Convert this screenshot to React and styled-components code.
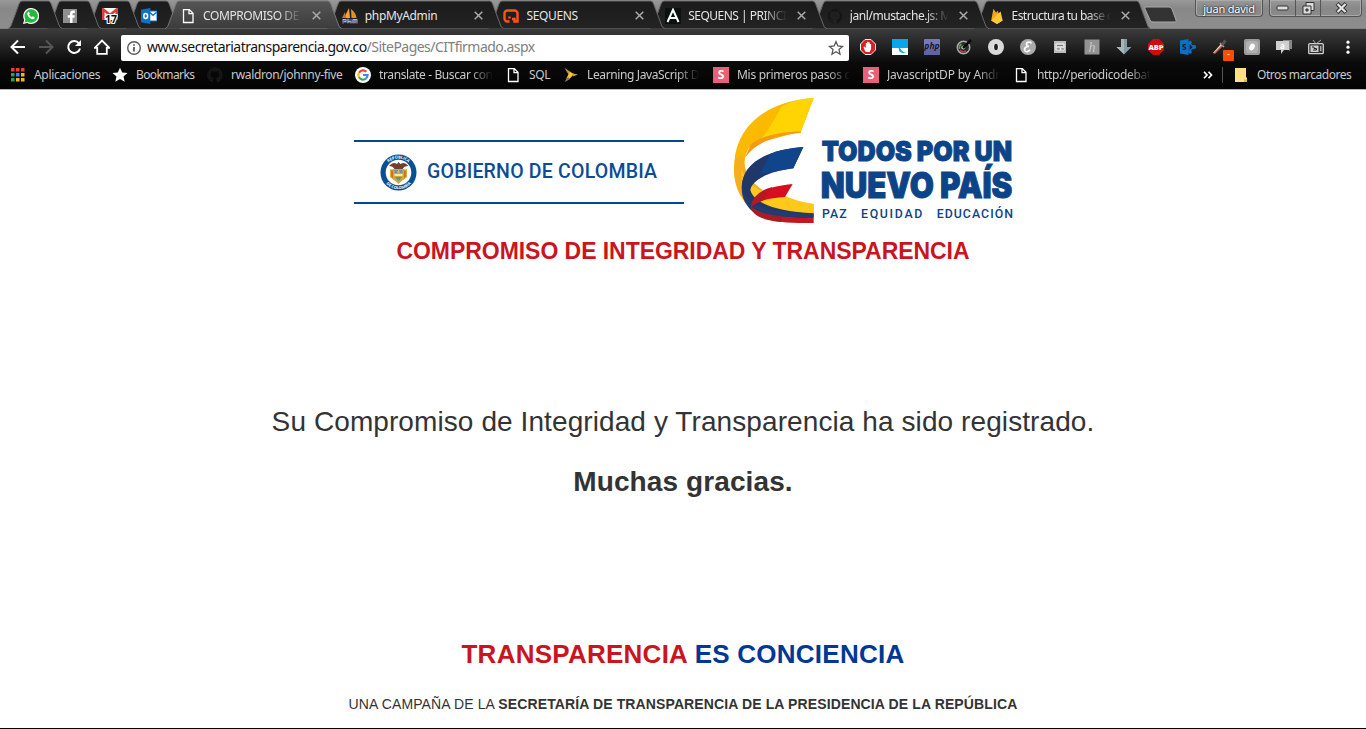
import React from "react";
import styled, { createGlobalStyle } from "styled-components";

const UI = `"Noto Sans", "Open Sans", sans-serif`;

const Global = createGlobalStyle`
  * { box-sizing: border-box; }
  body { margin: 0; background: #fff; overflow: hidden; font-family: "Liberation Sans", Arial, sans-serif; }
  svg { display: block; }
`;

const Window = styled.div`
  width: 1366px;
  height: 729px;
  display: flex;
  flex-direction: column;
  border-bottom: 1px solid #000;
  background: #fff;
`;

const TabStrip = styled.div`
  height: 28px;
  display: flex;
  padding-left: 8px;
  background: linear-gradient(#999, #888 30%, #8e8e8e);
`;

const TabBox = styled.div`
  position: relative;
  z-index: ${(p) => p.$z};
  flex: none;
  width: ${(p) => p.$w}px;
  height: 29px;
  margin-right: -15px;
  padding: 2px 0 0 15px;
  display: flex;
  align-items: center;
`;

const TabShape = styled.svg`
  position: absolute;
  inset: 0;
  z-index: -1;
`;

const TabTitle = styled.span`
  width: 99px;
  margin-left: 7px;
  white-space: nowrap;
  font: 12px/18px ${UI};
  letter-spacing: ${(p) => p.$ls}px;
  color: #e4e4e4;
  ${(p) => p.$fade && "mask-image: linear-gradient(90deg, #000 76%, transparent 100%);"}
`;

const TabClose = styled.svg`
  margin-left: 10px;
`;

const NewTab = styled.svg`
  margin: 6px 0 0 9px;
  flex: none;
`;

const WindowControls = styled.div`
  display: flex;
  gap: 6px;
  margin-left: auto;
  padding-right: 4px;
`;

const UserButton = styled.div`
  width: 68px;
  height: 17px;
  border: 1px solid #555;
  border-top: 0;
  border-radius: 0 0 4px 4px;
  box-shadow: inset 0 0 0 1px #aaa;
  color: #fff;
  font: 11px/17px ${UI};
  letter-spacing: -0.2px;
  text-align: center;
  text-shadow: 0 0 2px #222, 0 0 2px #222;
`;

const ControlGroup = styled.div`
  display: flex;
  height: 17px;
  border: 1px solid #555;
  border-top: 0;
  border-radius: 0 0 4px 4px;
  box-shadow: inset 0 0 0 1px #aaa;
`;

const Control = styled.div`
  width: ${(p) => p.$w}px;
  display: flex;
  justify-content: center;
  align-items: center;
  & + & { border-left: 1px solid #555; }
`;

const Chrome = styled.div`
  height: 62px;
  background: linear-gradient(#3b3b3b, #222 18px, #0a0a0a 34px, #030303);
  border-top: 1px solid #808080;
  border-bottom: 1px solid #b5b5b5;
`;

const Toolbar = styled.div`
  height: 36px;
  display: flex;
  align-items: center;
  padding-left: 10px;
`;

const NavButtons = styled.div`
  display: flex;
  gap: 12px;
  width: 111px;
`;

const AddressBar = styled.div`
  width: 728px;
  height: 26px;
  margin-top: 1px;
  padding: 0 5px;
  display: flex;
  align-items: center;
  background: #fff;
  border-radius: 2px;
`;

const Url = styled.span`
  flex: 1;
  margin-left: 5px;
  padding-bottom: 2px;
  white-space: nowrap;
  font: 14px/20px ${UI};
  letter-spacing: -0.53px;
  color: #808080;
  b { font-weight: 400; color: #111; }
`;

const Extensions = styled.div`
  display: flex;
  gap: 16px;
  margin-left: 11px;
`;

const ExtBadge = styled.span`
  position: absolute;
  left: 11px;
  top: 11px;
  width: 11px;
  height: 11px;
  background: #ff4d00;
  border-radius: 1px;
  color: #fff;
  font: 9px/8px ${UI};
  text-align: center;
`;

const ExtIcon = styled.div`
  position: relative;
  width: 16px;
  height: 16px;
`;

const Bookmarks = styled.div`
  height: 24px;
  margin-top: -2px;
  padding-left: 10px;
  display: flex;
  align-items: center;
`;

const Bookmark = styled.div`
  width: ${(p) => p.$w}px;
  flex: none;
  display: flex;
  align-items: center;
  gap: 8px;
`;

const BookmarkText = styled.span`
  max-width: 114px;
  white-space: nowrap;
  font: 12px/18px ${UI};
  letter-spacing: ${(p) => p.$ls}px;
  color: #c9c9c9;
  ${(p) => p.$fade && "mask-image: linear-gradient(90deg, #000 80%, transparent 100%);"}
`;

const BookmarkDivider = styled.div`
  width: 1px;
  height: 16px;
  margin: 0 10px 0 9px;
  background: #555;
`;

const Page = styled.main`
  flex: 1;
  display: flex;
  flex-direction: column;
  align-items: center;
  color: #333;
  text-align: center;
  white-space: nowrap;
`;

const Logos = styled.div`
  width: 662px;
  height: 140px;
  display: flex;
  justify-content: space-between;
`;

const Government = styled.div`
  width: 330px;
  height: 64px;
  margin: 50px 0 0 2px;
  padding-left: 26px;
  display: flex;
  align-items: center;
  border-top: 2px solid #00498f;
  border-bottom: 2px solid #00498f;
`;

const GovernmentName = styled.span`
  margin-left: 10px;
  font: 500 19.500px/24px Roboto, sans-serif;
  letter-spacing: 0.21px;
  color: #0b4c92;
`;

const Heading = styled.h1`
  margin: 6px 0 0;
  font-size: 23px;
  line-height: 30px;
  letter-spacing: -0.05px;
  color: #c9151e;
`;

const Message = styled.p`
  margin: 136px 0 0;
  font-size: 28px;
  line-height: 40px;
  letter-spacing: 0.09px;
`;

const Thanks = styled.p`
  margin: 20px 0 0;
  font-size: 28px;
  line-height: 40px;
  font-weight: 700;
  letter-spacing: 0.1px;
`;

const Slogan = styled.h2`
  margin: 134px 0 0;
  font-size: 26px;
  line-height: 36px;
  letter-spacing: 0.25px;
  color: #003893;
  span { color: #c9151e; }
`;

const Campaign = styled.p`
  margin: 22px 0 0;
  font-size: 14px;
  line-height: 20px;
  letter-spacing: 0.12px;
`;

const Svg = ({ s = 16, children, ...p }) => (
  <svg width={s} height={s} viewBox="0 0 16 16" fill="none" style={{ flex: "none" }} {...p}>{children}</svg>
);

const T = (p) => <text fontFamily="Open Sans, sans-serif" textAnchor="middle" {...p} />;

const github = "M8 .6a7.5 7.5 0 0 0-2.4 14.6c.4.1.5-.2.5-.4v-1.4c-2.1.4-2.6-1-2.6-1-.4-.9-.9-1.1-.9-1.1-.6-.5.1-.5.1-.5.8.1 1.2.8 1.2.8.7 1.2 1.8.8 2.2.6 0-.5.3-.8.5-1C4.900 11 3.100 10.400 3.100 7.500c0-.8.3-1.500.8-2-.1-.2-.3-1 .1-2 0 0 .6-.2 2 .8a7 7 0 0 1 3.800 0c1.400-1 2-.8 2-.8.4 1 .2 1.800.1 2 .5.5.8 1.200.8 2 0 2.900-1.700 3.500-3.400 3.700.3.2.5.7.5 1.400v2.200c0 .2.1.500.5.400A7.500 7.500 0 0 0 8 .6z";

const icons = {
  whatsapp: (
    <Svg><path d="M0 16l1.200-4.200A8 8 0 1 1 4.200 14.900z" fill="#fff" /><path d="M1.500 14.500l.9-3.100A6.700 6.700 0 1 1 4.700 13.700z" fill="#25b83c" /><path d="M5.200 3.900c.4-.3.900-.1 1 .3l.6 1.400-.7 1c.6 1.200 1.500 2 2.700 2.600l1-.9 1.800.9c.2 1.200-.7 2-1.800 2C7 11 4 8 4.200 5.600c0-.7.500-1.300 1-1.700z" fill="#fff" /></Svg>
  ),
  facebook: (
    <Svg><rect x="1" y="1" width="14" height="14" fill="#8f8f8f" /><path d="M8 15V9.700H5.800V7.200H8V5.500C8 3.500 9.100 2.500 11 2.500h1.800v2.400h-1.300c-.8 0-1 .4-1 1v1.300h2.300l-.4 2.500h-1.900V15z" fill="#fff" /></Svg>
  ),
  gmail: (
    <Svg><rect y="0" width="16" height="12" fill="#f4f4f4" /><path d="M1.300 12V1.500L8 7l6.700-5.500V12" stroke="#dc3b35" strokeWidth="2.500" /><path d="M3 0h10L8 4z" fill="#fff" /><T x="9" y="15.300" fontSize="10.500" fontWeight="700" fill="#111" stroke="#fff" strokeWidth="2.200" strokeLinejoin="round" style={{ paintOrder: "stroke" }}>17</T></Svg>
  ),
  outlook: (
    <Svg><path d="M8 3h8v10H8z" fill="#fff" stroke="#0d72c6" /><path d="M9 4.500l3 2.800 3.500-3" stroke="#0d72c6" strokeWidth="1.300" /><path d="M0 1.700L9.300 0v16L0 14.300z" fill="#0d72c6" /><ellipse cx="4.700" cy="8" rx="1.900" ry="2.500" stroke="#fff" strokeWidth="1.600" /></Svg>
  ),
  file: <Svg><path d="M3.500 1.600h5.800L13 5.300v9.200H3.500zM9 1.600v4h4" stroke="#fff" strokeWidth="1.300" /></Svg>,
  phpmyadmin: (
    <Svg><path d="M7 0l1 10H2z" fill="#f5a13a" /><path d="M9 1c4 3 5 6 5.500 9L9.500 10z" fill="#ed8e24" /><path d="M3 4L4 10H0z" fill="#b7783d" /><path d="M0 11h16l-2 4H2z" fill="#4f4c78" /><path d="M1 15.500v-4h3v2H2m4-3v5m0-2h3v2m2 0v-4h4v4m-2-4v4" stroke="#c8c4dc" strokeWidth=".8" /></Svg>
  ),
  sequens: <Svg><path d="M6.500 13.500H4.500a3 3 0 0 1-3-3v-5a3 3 0 0 1 3-3h7a3 3 0 0 1 3 3v8h-3v-2.500H9M6.500 8.500v2" stroke="#ff560f" strokeWidth="2.400" /></Svg>,
  letterA: <Svg><rect width="16" height="16" fill="#0a1210" /><path d="M2.500 14L8 1.800 13.500 14M4.700 10h6.600" stroke="#fff" strokeWidth="2" /></Svg>,
  github: <Svg><path d={github} fill="#151515" stroke="#2c2c2c" strokeWidth=".3" /></Svg>,
  firebase: <Svg><path d="M2.200 12.500L4.400.700l2.700 4 1.300-2 5.200 9.800L8 16z" fill="#ffa611" /><path d="M2.200 12.500L11.600 3.600l2 8.900L8 16z" fill="#ffca3a" /></Svg>,
  apps: (
    <Svg>{[0, 1, 2].map((r) => [0, 1, 2].map((c) => (
      <rect key={`${r}${c}`} x={1 + c * 5} y={1 + r * 5} width="3.500" height="3.500" fill={[["#ed3b32", "#ed3b32", "#ed3b32"], ["#2ba24c", "#3b82f0", "#f6b51c"], ["#2ba24c", "#f6b51c", "#f6b51c"]][r][c]} />
    )))}</Svg>
  ),
  star: <Svg><path d="M8 .7l2.200 4.900 5.300.5-4 3.500 1.200 5.200L8 12.100l-4.700 2.700 1.200-5.200-4-3.500 5.300-.5z" fill="#fff" /></Svg>,
  google: (
    <Svg><circle cx="8" cy="8" r="8" fill="#fff" /><g strokeWidth="2.200"><path d="M4 5.700A4.600 4.600 0 0 1 11.300 4.800" stroke="#ea4335" /><path d="M4 5.600a4.600 4.600 0 0 0 0 4.800" stroke="#fbbc05" /><path d="M4 10.300a4.600 4.600 0 0 0 7 1.200" stroke="#34a853" /><path d="M8 8h4.600a4.600 4.600 0 0 1-1.600 3.500" stroke="#4285f4" /></g></Svg>
  ),
  bird: <Svg><path d="M1.500 1l7 4.500L7 10z" fill="#c99332" /><path d="M7 5l4 2-4.500 5-4 2.500L4 10z" fill="#f1cb20" /><path d="M10 6.500l5 1-5 2z" fill="#b5a45a" /><path d="M5 10l-3.500 5 5.500-3z" fill="#8a5a9a" /></Svg>,
  slides: <Svg><rect width="16" height="16" fill="#e8607a" /><T x="8" y="12.300" fontSize="12" fontWeight="700" fill="#fff">S</T></Svg>,
  folder: <Svg><path d="M2 1h11v9.500h1V15H2z" fill="#ffe083" /><path d="M11 15v-2.500h3V15z" fill="#e5b83f" /></Svg>,
};

const extensions = [
  <><path d="M5 .5h6L15.500 5v6L11 15.500H5L.5 11V5z" fill="#dc1c20" stroke="#eee" /><path d="M5 12L3.500 8l1-.5L5.800 9V4h1.300v3.500V2.800h1.400v4.700V3.500h1.300V8V5h1.300v5l-1.500 3H6z" fill="#fff" /></>,
  <><rect width="16" height="16" fill="#07a6ed" /><path d="M0 9h6.500l1 3.500 2.500 1.500h6v2H0zM8 9h8v5l-4-.5-2-1.500z" fill="#fff" /></>,
  <><rect width="16" height="16" rx="1" fill="#7679b5" /><rect y="10" width="16" height="6" fill="#6063a6" /><T x="8" y="9.500" fontSize="8.500" fontWeight="700" fontStyle="italic" fill="#15152b">php</T></>,
  <><circle cx="7.500" cy="8.500" r="6.200" fill="#282828" stroke="#aaa" strokeWidth="1.500" /><path d="M3.500 10a4.500 4.500 0 0 1 2-5" stroke="#58a34c" strokeWidth="1.600" /><path d="M4 11a4.500 4.500 0 0 0 6 1" stroke="#b8434b" strokeWidth="1.500" /><circle cx="7.300" cy="8.500" r="2" fill="#ccc" /><path d="M7 9L15 1" stroke="#090909" strokeWidth="2.500" /></>,
  <><circle cx="8" cy="8" r="8" fill="#d9d9d9" /><ellipse cx="8" cy="8" rx="2.500" ry="4" fill="#202020" stroke="#fff" /></>,
  <><circle cx="8" cy="8" r="8" fill="#aaa" /><path d="M11.300 4.500C10.500 2 6 3 6.500 5.500 6.700 7 8 7.300 9 7.300 5.500 7.300 4 9.500 4.700 11.500c.8 2 4 1.500 5.300-.8" stroke="#fff" strokeWidth="1.700" /></>,
  <><rect x="2" y="2" width="12" height="12" fill="#bdbdbd" /><path d="M4 5h8v6H4zM4 8h8M8.500 8v3" stroke="#eee" /><path d="M5 6.500h6M5 10h2.500M9.500 10H12" stroke="#777" /></>,
  <><rect x=".5" y=".5" width="15" height="15" fill="#929292" /><T x="8" y="13" fontSize="14" fontStyle="italic" fontFamily="Liberation Serif, serif" fill="#c7c7c7">h</T></>,
  <><path d="M5 0h6v8h4.500L8 15.500.5 8H5z" fill="#829da3" /><path d="M5 0h3v15L.5 8H5z" fill="#a9b6b8" /></>,
  <><path d="M5 0h6l5 5v6l-5 5H5l-5-5V5z" fill="#d10b0b" /><T x="8" y="10.800" fontSize="7.500" fontWeight="800" fill="#fff">ABP</T></>,
  <><path d="M9 4l5 4-5 4.500M9 4v9" stroke="#0872c9" strokeWidth="1.300" /><circle cx="10" cy="3.500" r="1.800" fill="#0872c9" /><circle cx="14.200" cy="8" r="1.900" fill="#0872c9" /><circle cx="10" cy="13" r="1.800" fill="#0872c9" /><path d="M0 1.500L8.500 0v16L0 14.500z" fill="#0872c9" /><T x="4.300" y="11.300" fontSize="9" fontWeight="700" fill="#161616">S</T></>,
  <><path d="M1 14l8-9 2 2-8 8z" fill="#c45f3c" /><path d="M1 14l8-9 1 1-8 8z" fill="#e8d0c5" /><path d="M8 4l4 4" stroke="#aaa" strokeWidth="1.500" /><path d="M10 6l3.500-4.500" stroke="#555" strokeWidth="3" /></>,
  <><rect width="16" height="16" rx="2" fill="#9b9b9b" /><rect x="2" y="2" width="12" height="12" rx="3" fill="#b0b0b0" /><ellipse cx="8" cy="8" rx="2.600" ry="3.500" fill="#fff" transform="rotate(25 8 8)" /></>,
  <><path d="M7 1h9v9h-2v2l-3-2H7z" fill="#888" /><path d="M0 2h13v9H8l-3 4v-4H0z" fill="#cfcfcf" /><T x="6.500" y="9.500" fontSize="8" fontWeight="700" fill="#fff">a</T></>,
  <><path d="M5 1l3 4 5-4" stroke="#aaa" /><rect x=".7" y="4.700" width="14.600" height="10" rx="1" fill="#333" stroke="#ccc" strokeWidth="1.300" /><rect x="2.500" y="6.500" width="8" height="6.500" fill="#ccc" /><path d="M4 8h2v1.500h2.500V11H5" stroke="#222" /><path d="M12.800 7v5" stroke="#ddd" /></>,
  <><circle cx="8" cy="3.200" r="1.600" fill="#fff" /><circle cx="8" cy="8.200" r="1.600" fill="#fff" /><circle cx="8" cy="13.200" r="1.600" fill="#fff" /></>,
];

const tabs = [
  { icon: "whatsapp", w: 54.25 },
  { icon: "facebook", w: 54.25 },
  { icon: "gmail", w: 54.25 },
  { icon: "outlook", w: 54.25 },
  { icon: "file", title: "COMPROMISO DE", w: 176.8, active: true, ls: -0.4 },
  { icon: "phpmyadmin", title: "phpMyAdmin", w: 176.7, ls: -0.35 },
  { icon: "sequens", title: "SEQUENS", w: 176.7, ls: -0.35 },
  { icon: "letterA", title: "SEQUENS | PRINCI", w: 176.7, ls: -0.5 },
  { icon: "github", title: "janl/mustache.js: M", w: 176.7, ls: -0.45 },
  { icon: "firebase", title: "Estructura tu base d", w: 176.7, ls: -0.55 },
];

const bookmarks = [
  { icon: "apps", text: "Aplicaciones", w: 102, ls: -0.3 },
  { icon: "star", text: "Bookmarks", w: 95, ls: -0.6 },
  { icon: "github", text: "rwaldron/johnny-five", w: 148, ls: -0.33 },
  { icon: "google", text: "translate - Buscar con", w: 150, fade: true, ls: -0.38 },
  { icon: "file", text: "SQL", w: 58, ls: -0.4 },
  { icon: "bird", text: "Learning JavaScript D", w: 150, fade: true, ls: -0.38 },
  { icon: "slides", text: "Mis primeros pasos c", w: 150, fade: true, ls: -0.3 },
  { icon: "slides", text: "JavascriptDP by Andr", w: 150, fade: true, ls: -0.2 },
  { icon: "file", text: "http://periodicodebat", w: 190, fade: true, ls: -0.35 },
];

function Tab({ icon, title, w, active, ls, index }) {
  return (
    <TabBox $w={w} $z={active ? 20 : 15 - index}>
      <TabShape width={w} height="29">
        <defs><linearGradient id={`tab${index}`} x2="0" y2="1"><stop stopColor={active ? "#555" : "#1b1b1b"} /><stop offset="1" stopColor={active ? "#3c3c3c" : "#232323"} /></linearGradient></defs>
        <path d={`M0 28.500C2 28 3 26 4 23L11 4Q12 1 14 1H${w - 14}Q${w - 12} 1 ${w - 11} 4L${w - 4} 23Q${w - 3} 28 ${w} 28.500`} fill={`url(#tab${index})`} stroke={active ? "#777" : "#686868"} />
      </TabShape>
      {icons[icon]}
      {title && <TabTitle $ls={ls} $fade={title.length > 12}>{title}</TabTitle>}
      {title && <TabClose width="9" height="9" viewBox="0 0 9 9"><path d="M.7.7l7.600 7.600M8.300.7L.7 8.300" stroke="#aaa" strokeWidth="1.500" /></TabClose>}
    </TabBox>
  );
}

function Emblem() {
  return (
    <svg width="37" height="37" viewBox="0 0 37 37">
      <circle cx="18.500" cy="18.500" r="18" fill="#094f94" />
      <circle cx="18.500" cy="18.500" r="12.800" fill="#fff" />
      <defs><path id="arcTop" d="M4.500 18.500a14 14 0 0 1 28 0" /><path id="arcLow" d="M1.800 18.500a16.700 16.700 0 0 0 33.400 0" /></defs>
      <text fontFamily="Open Sans, sans-serif" fontSize="4" fontWeight="700" fill="#fff" textAnchor="middle"><textPath href="#arcTop" startOffset="50%">REPÚBLICA</textPath></text>
      <text fontFamily="Open Sans, sans-serif" fontSize="4" fontWeight="700" fill="#fff" textAnchor="middle"><textPath href="#arcLow" startOffset="50%">DE COLOMBIA</textPath></text>
      <path d="M9 12c3-3 5-4 8-2l1.500-2 2 2c3-2 5-1 8 2-3 0-5 1-6 3h-8c-1-2-3-3-5.500-3z" fill="#70402f" />
      <path d="M10 15l4 1v10l-4-3zM27 15l-4 1v10l4-3z" fill="#e3b02c" />
      <path d="M11.500 16l2 1v8l-2-2zM25.500 16l-2 1v8l2-2z" fill="#bd3d38" />
      <path d="M12.500 15h12v9.500l-6 5.500-6-5.500z" fill="#d6a82c" />
      <path d="M14.500 16h8v3h-8z" fill="#6f93a6" /><path d="M14.500 20h8v2h-8z" fill="#f2e8c0" /><path d="M15 23h7l-3.500 4z" fill="#5b93a5" />
      <path d="M17 18h3M18.500 16v3" stroke="#e6c14a" />
    </svg>
  );
}

function CountryLogo() {
  const text = { fill: "#0d4488" };
  const bold = { ...text, fontFamily: "Inter, sans-serif", fontWeight: 900, lengthAdjust: "spacingAndGlyphs", stroke: "#0d4488", strokeWidth: 3 };
  return (
    <svg width="310" height="140" viewBox="0 0 930 420" style={{ flex: "none", marginRight: "-16px" }}>
      <path d="M281 24C150 32 52 100 43 215C36 280 60 340 115 368L281 371V342C190 334 100 310 78 245C69 218 75 190 91 166L243 124Z" fill="#fbb900" />
      <path d="M184 50Q230 25 281 24L243 124L117 153Q145 125 184 50Z" fill="#ffd400" />
      <path d="M243 124C165 128 100 140 76 185C90 157 145 138 243 124Z" fill="#f59a12" />
      <path d="M91 166C130 142 180 131 243 124L243 128C165 136 105 158 74 205Z" fill="#f59a12" />
      <path d="M46 211C61 191 72 190 72 219C75 250 95 279 128 300L96 350C58 323 35 270 46 211Z" fill="#f7ad20" />
      <path d="M65 238C74 270 95 289 124 303L172 307Q220 333 281 342V371Q120 374 65 290Z" fill="#ffc91c" />
      <path d="M250 171C150 178 66 215 65 291C67 322 84 344 110 356L281 382V370C170 364 102 341 91 300C95 270 150 243 220 235Z" fill="#203869" />
      <path d="M250 171L220 235L121 252L151 191Q193 176 250 171Z" fill="#10458b" />
      <path d="M66 289C69 328 112 355 170 364L281 371V386L120 380C84 360 61 326 66 289Z" fill="#243b70" />
      <path d="M218 282L195 321C155 324 113 330 93 352C98 309 143 289 218 282Z" fill="#d70d22" />
      <path d="M157 291L128 332Q107 338 93 352Q97 307 157 291Z" fill="#b71820" />
      <path d="M93 350C125 376 184 383 281 385V399C180 401 111 391 93 350Z" fill="#c51521" />
      <path d="M93 350C119 373 155 377 185 381V396C127 392 96 374 93 350Z" fill="#a91c20" />
      <text x="305" y="213" fontSize="83" textLength="571" {...bold}>TODOS POR UN</text>
      <text x="302" y="325" fontSize="105" textLength="575" {...bold}>NUEVO PAÍS</text>
      <g fontWeight="500" fontSize="37" fontFamily="Roboto, sans-serif">
        <text x="306" y="384" textLength="74" {...text}>PAZ</text>
        <text x="423" y="384" textLength="184" {...text}>EQUIDAD</text>
        <text x="650" y="384" textLength="229" {...text}>EDUCACIÓN</text>
      </g>
    </svg>
  );
}

export default function App() {
  return (
    <Window>
      <Global />
      <TabStrip>
        {tabs.map((t, i) => <Tab key={i} index={i} {...t} />)}
        <NewTab width="34" height="18"><path d="M2 1h23q2 0 3 2l4 11q1 2-1 2H9q-2 0-3-2L1 3q-1-2 1-2z" fill="#333" stroke="#aaa" /></NewTab>
        <WindowControls>
          <UserButton>juan david</UserButton>
          <ControlGroup>
            <Control $w={25}><svg width="13" height="6"><rect x="1" y="1" width="11" height="4" rx="1" fill="#ddd" stroke="#333" /></svg></Control>
            <Control $w={25}><svg width="13" height="13" fill="#ddd" stroke="#333"><path d="M4 .5h8v8H4z" /><path d="M1 4h8v8H1z" /><path d="M4 7h2v2H4z" fill="#777" /></svg></Control>
            <Control $w={41}><svg width="13" height="12"><path d="M2 1.500l9 9M11 1.500l-9 9" stroke="#333" strokeWidth="4" /><path d="M2.500 2l8 8M10.500 2l-8 8" stroke="#e5e5e5" strokeWidth="2.200" /></svg></Control>
          </ControlGroup>
        </WindowControls>
      </TabStrip>
      <Chrome>
        <Toolbar>
          <NavButtons>
            <Svg stroke="#fff" strokeWidth="2"><path d="M15 8H2M8 1.500L1.500 8 8 14.500" /></Svg>
            <Svg stroke="#555" strokeWidth="2"><path d="M1 8h13M8 1.500L14.500 8 8 14.500" /></Svg>
            <Svg stroke="#fff" strokeWidth="2"><path d="M13 4.300A6 6 0 1 0 14 9.500" /><path d="M15 1v6H9z" fill="#fff" stroke="none" /></Svg>
            <Svg stroke="#fff" strokeWidth="1.800"><path d="M.8 8.800L8 1.500l7.200 7.300h-2.400v6H3.200v-6z" /></Svg>
          </NavButtons>
          <AddressBar>
            <Svg stroke="#5a5a5a" strokeWidth="1.400"><circle cx="8" cy="8" r="6.300" /><path d="M8 7v4.500M8 4.200v1.600" strokeWidth="1.800" /></Svg>
            <Url><b>www.secretariatransparencia.gov.co</b>/SitePages/CITfirmado.aspx</Url>
            <Svg stroke="#555" strokeWidth="1.300"><path d="M8 1.700l1.900 4.300 4.600.5-3.500 3.100 1 4.600L8 11.800l-4 2.400 1-4.600-3.500-3.100L6.100 6z" /></Svg>
          </AddressBar>
          <Extensions>
            {extensions.map((e, i) => <ExtIcon key={i}><Svg>{e}</Svg>{i === 11 && <ExtBadge>-</ExtBadge>}</ExtIcon>)}
          </Extensions>
        </Toolbar>
        <Bookmarks>
          {bookmarks.map((b, i) => <Bookmark key={i} $w={b.w}>{icons[b.icon]}<BookmarkText $ls={b.ls} $fade={b.fade}>{b.text}</BookmarkText></Bookmark>)}
          <svg width="10" height="8"><path d="M1 .7L4 4 1 7.300M5.500.7L8.500 4l-3 3.300" fill="none" stroke="#fff" strokeWidth="1.700" /></svg>
          <BookmarkDivider />
          <Bookmark $w={130}>{icons.folder}<BookmarkText $ls={-0.45}>Otros marcadores</BookmarkText></Bookmark>
        </Bookmarks>
      </Chrome>
      <Page>
        <Logos>
          <Government><Emblem /><GovernmentName>GOBIERNO DE COLOMBIA</GovernmentName></Government>
          <CountryLogo />
        </Logos>
        <Heading>COMPROMISO DE INTEGRIDAD Y TRANSPARENCIA</Heading>
        <Message>Su Compromiso de Integridad y Transparencia ha sido registrado.</Message>
        <Thanks>Muchas gracias.</Thanks>
        <Slogan><span>TRANSPARENCIA</span> ES CONCIENCIA</Slogan>
        <Campaign>UNA CAMPAÑA DE LA <b>SECRETARÍA DE TRANSPARENCIA DE LA PRESIDENCIA DE LA REPÚBLICA</b></Campaign>
      </Page>
    </Window>
  );
}
